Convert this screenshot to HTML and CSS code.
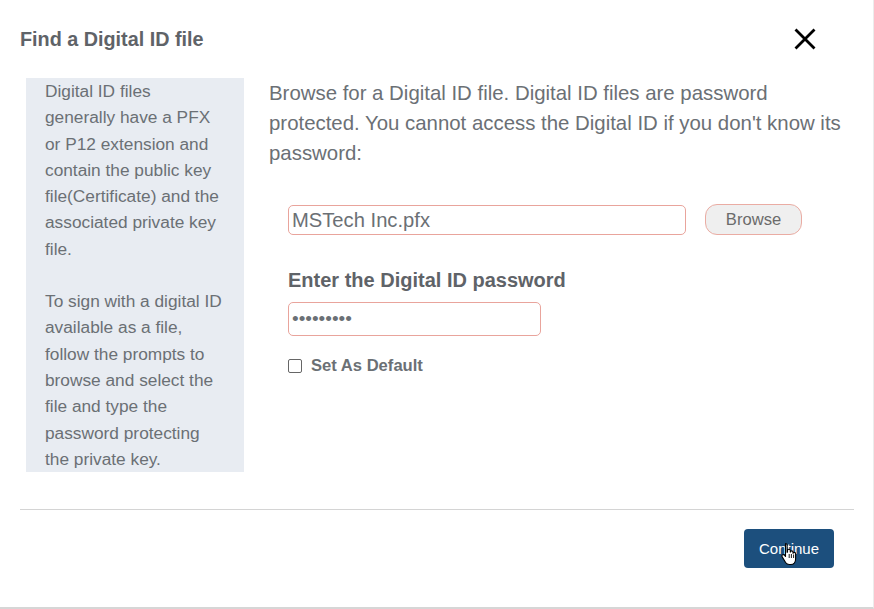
FILE: index.html
```html
<!DOCTYPE html>
<html>
<head>
<meta charset="utf-8">
<link rel="stylesheet" href="styles.css">
</head>
<body>
<div class="modal">
  <div class="header">
    <h1 class="title">Find a Digital ID file</h1>
    <svg class="close" width="22" height="22" viewBox="0 0 22 22"><path d="M1.5 1.5 L20.5 20.5 M20.5 1.5 L1.5 20.5" stroke="#000" stroke-width="2.8" fill="none"/></svg>
  </div>
  <div class="content">
    <div class="sidebar">
      <p class="side-text">Digital ID files generally have a PFX or P12 extension and contain the public key file(Certificate) and the associated private key file.</p>
      <p class="side-text gap">To sign with a digital ID available as a file, follow the prompts to browse and select the file and type the password protecting the private key.</p>
    </div>
    <div class="main">
      <p class="intro">Browse for a Digital ID file. Digital ID files are password protected. You cannot access the Digital ID if you don't know its password:</p>
      <div class="form">
        <div class="file-row">
          <div class="file-input">MSTech Inc.pfx</div>
          <button class="browse">Browse</button>
        </div>
        <div class="pw-label">Enter the Digital ID password</div>
        <div class="pw-input">&#8226;&#8226;&#8226;&#8226;&#8226;&#8226;&#8226;&#8226;&#8226;</div>
        <label class="check-row"><span class="checkbox"></span><span class="check-label">Set As Default</span></label>
      </div>
    </div>
  </div>
  <div class="divider"></div>
  <div class="footer">
    <button class="continue">Continue
      <svg class="cursor" width="16" height="24" viewBox="0 0 16 24"><path d="M4.5 1.5c1 0 1.6.7 1.6 1.6v7.2l.4-.1V8.6c0-.9.6-1.4 1.4-1.4s1.4.5 1.4 1.4v1.5c.1-.8.7-1.2 1.4-1.2.8 0 1.3.5 1.3 1.3v1.1c.2-.6.7-.9 1.3-.9.8 0 1.3.6 1.3 1.4v5.2c0 2.8-1.6 5.5-4.8 5.5H8.1c-1.6 0-2.6-.8-3.5-2L1.2 14.9c-.5-.8-.3-1.7.4-2.1.7-.4 1.5-.2 2 .5l.9 1.2V3.1c0-.9.4-1.6 0-1.6z" fill="#fff" stroke="#000" stroke-width="1.1" stroke-linejoin="round"/><path d="M8.2 12v4M10.4 12v4M12.6 12.5v3.5" stroke="#000" stroke-width="0.9"/></svg>
    </button>
  </div>
</div>
</body>
</html>
```

FILE: styles.css
```css
html, body {
  margin: 0;
  padding: 0;
  background: #fff;
}
body {
  font-family: "Liberation Sans", Arial, sans-serif;
  color: #6b7075;
}
.modal {
  width: 874px;
  height: 609px;
  box-sizing: border-box;
  border-bottom: 2px solid #d6d6d6;
  border-right: 1px solid #ececec;
  position: relative;
}
.header {
  display: flex;
  justify-content: space-between;
  align-items: center;
  padding: 28px 57px 0 20px;
  height: 22px;
}
.title {
  margin: 0;
  font-size: 19.8px;
  font-weight: bold;
  color: #5f6368;
  line-height: 22px;
}
.close {
  display: block;
}
.content {
  display: flex;
  align-items: flex-start;
  margin-top: 28px;
  padding-left: 26px;
}
.sidebar {
  width: 218px;
  box-sizing: border-box;
  padding: 0 19px 0 19px;
  background: #e8ecf2;
  flex-shrink: 0;
}
.side-text {
  margin: 0;
  font-size: 17.3px;
  line-height: 26.3px;
  color: #6b7075;
}
.side-text.gap {
  margin-top: 26px;
}
.main {
  margin-left: 25px;
  width: 572px;
}
.intro {
  margin: 0;
  font-size: 20.4px;
  line-height: 30px;
  color: #6b7075;
}
.form {
  padding-left: 19px;
  margin-top: 36px;
}
.file-row {
  display: flex;
  align-items: center;
}
.file-input {
  width: 398px;
  height: 30px;
  box-sizing: border-box;
  border: 1px solid #e9a49c;
  border-radius: 5px;
  padding: 0 3px;
  font-size: 20.2px;
  line-height: 28px;
  color: #6b7075;
}
.browse {
  margin-left: 19px;
  width: 97px;
  height: 31px;
  border: 1px solid #eaaca3;
  border-radius: 12px;
  background: #efefef;
  font-family: "Liberation Sans", Arial, sans-serif;
  font-size: 16.6px;
  color: #6b6b6b;
  padding: 0;
}
.pw-label {
  margin-top: 33px;
  font-size: 20px;
  font-weight: bold;
  line-height: 24px;
  color: #5f6368;
}
.pw-input {
  margin-top: 10px;
  width: 253px;
  height: 34px;
  box-sizing: border-box;
  border: 1px solid #e9a49c;
  border-radius: 5px;
  padding: 0 3px;
  font-size: 19px;
  line-height: 32px;
  color: #6b7075;
}
.check-row {
  display: flex;
  align-items: center;
  margin-top: 21px;
}
.checkbox {
  width: 12px;
  height: 12px;
  border: 1px solid #666;
  border-radius: 2px;
  background: #fff;
  flex-shrink: 0;
}
.check-label {
  margin-left: 9px;
  font-size: 16.6px;
  font-weight: bold;
  color: #6b7075;
  line-height: 18px;
}
.divider {
  position: absolute;
  left: 20px;
  right: 19px;
  top: 509px;
  height: 1px;
  background: #d4d4d4;
}
.footer {
  position: absolute;
  right: 39px;
  top: 529px;
}
.continue {
  position: relative;
  width: 90px;
  height: 39px;
  border: none;
  border-radius: 4px;
  background: #1c4f7d;
  color: #fff;
  font-family: "Liberation Sans", Arial, sans-serif;
  font-size: 15px;
  padding: 0;
}
.cursor {
  position: absolute;
  left: 37px;
  top: 13px;
}
```
